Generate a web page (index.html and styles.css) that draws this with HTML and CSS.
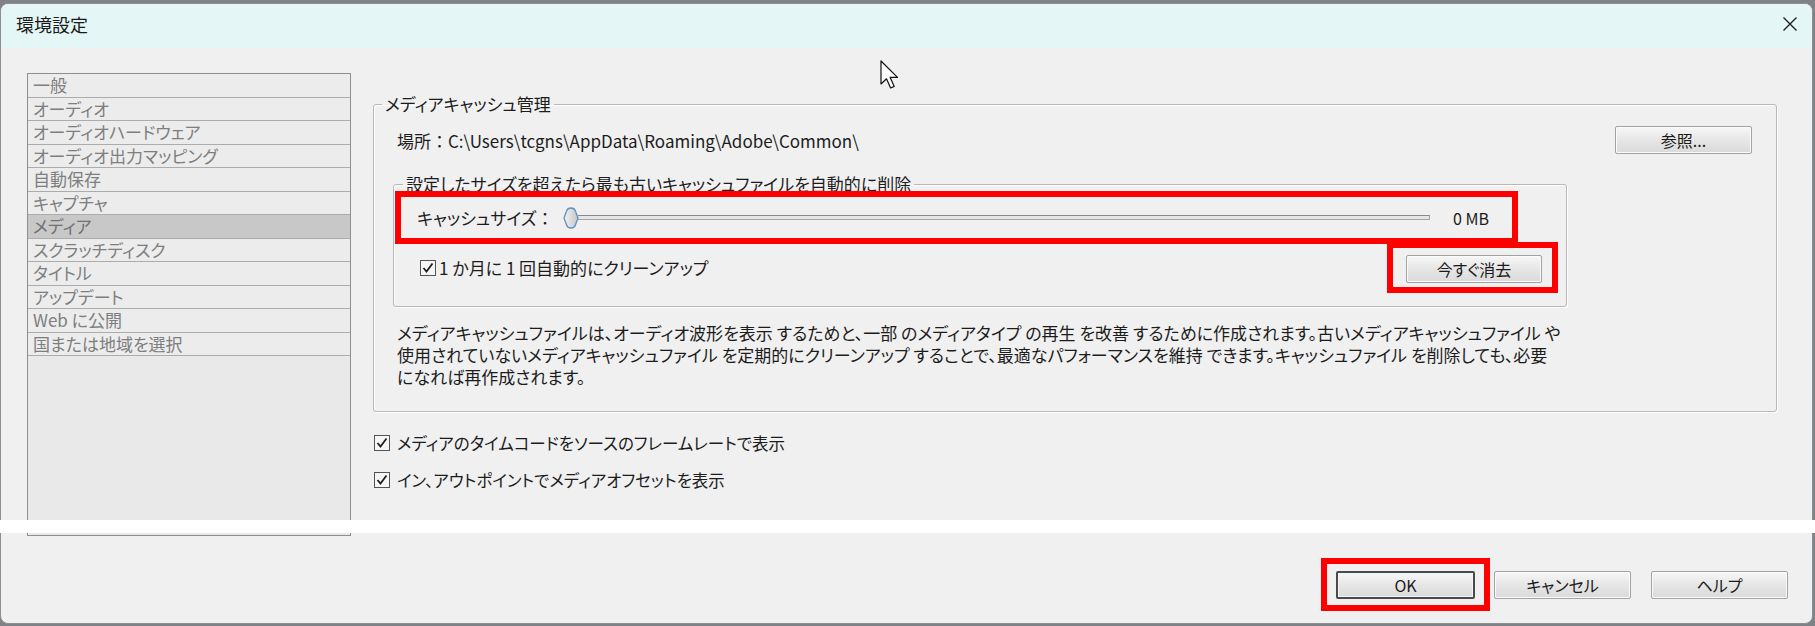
FILE: index.html
```html
<!DOCTYPE html>
<html lang="ja">
  <head>
    <meta charset="UTF-8" />
    <meta name="viewport" content="width=device-width, initial-scale=1.0" />
    <title>環境設定</title>
    <link rel="stylesheet" href="styles.css">
  </head>
  <body>
    <div class="window">
      <header class="titlebar">
        <span class="title">環境設定</span>
        <svg class="close" width="16" height="16" viewBox="0 0 16 16">
          <path d="M1.5 1.5 L14.5 14.5 M14.5 1.5 L1.5 14.5" />
        </svg>
      </header>

      <div class="main">
        <ul class="nav">
          <li>一般</li>
          <li>オーディオ</li>
          <li>オーディオハードウェア</li>
          <li>オーディオ出力マッピング</li>
          <li>自動保存</li>
          <li>キャプチャ</li>
          <li class="active">メディア</li>
          <li>スクラッチディスク</li>
          <li>タイトル</li>
          <li>アップデート</li>
          <li>Web に公開</li>
          <li>国または地域を選択</li>
        </ul>

        <div class="panel">
          <fieldset class="group">
            <legend>メディアキャッシュ管理</legend>
            <div class="location-row">
              <span class="location">場所<span class="colon">：</span>C:\Users\tcgns\AppData\Roaming\Adobe\Common\</span>
              <button class="btn">参照...</button>
            </div>

            <fieldset class="subgroup">
              <legend>設定したサイズを超えたら最も古いキャッシュファイルを自動的に削除</legend>
              <div class="mark size-row">
                <span class="size-label">キャッシュサイズ<span class="colon">：</span></span>
                <div class="slider">
                  <svg class="thumb" width="16" height="22" viewBox="0 0 16 22">
                    <defs>
                      <linearGradient id="thumbFill" x1="0" y1="0" x2="1" y2="0">
                        <stop offset="0" stop-color="#f4f4f4" />
                        <stop offset="1" stop-color="#c4c4c4" />
                      </linearGradient>
                    </defs>
                    <path d="M8 1 C10.5 1 11.8 2 12.4 4 L15 11 L12.4 18 C11.8 20 10.5 21 8 21 C5.5 21 4.2 20 3.6 18 L1 11 L3.6 4 C4.2 2 5.5 1 8 1 Z" fill="url(#thumbFill)" stroke="#5f92c0" stroke-width="1.3" />
                  </svg>
                  <div class="track"></div>
                </div>
                <span class="size-value">0 MB</span>
              </div>
              <div class="cleanup-row">
                <label class="check">
                  <svg class="box" width="16" height="16" viewBox="0 0 16 16">
                    <rect x="0.5" y="0.5" width="15" height="15" />
                    <path d="M3.5 8 L6.5 11.5 L12.5 3.5" />
                  </svg>
                  <span>1 か月に 1 回自動的にクリーンアップ</span>
                </label>
                <div class="mark clear-mark">
                  <button class="btn btn-clear">今すぐ消去</button>
                </div>
              </div>
            </fieldset>

            <p class="note">
              メディアキャッシュファイルは、オーディオ波形を表示 するためと、一部 のメディアタイプ の再生 を改善 するために作成されます。古いメディアキャッシュファイル や<br>
              使用されていないメディアキャッシュファイル を定期的にクリーンアップ することで、最適なパフォーマンスを維持 できます。キャッシュファイル を削除しても、必要<br>
              になれば再作成されます。
            </p>
          </fieldset>

          <label class="check option">
            <svg class="box" width="16" height="16" viewBox="0 0 16 16">
              <rect x="0.5" y="0.5" width="15" height="15" />
              <path d="M3.5 8 L6.5 11.5 L12.5 3.5" />
            </svg>
            <span>メディアのタイムコードをソースのフレームレートで表示</span>
          </label>
          <label class="check option">
            <svg class="box" width="16" height="16" viewBox="0 0 16 16">
              <rect x="0.5" y="0.5" width="15" height="15" />
              <path d="M3.5 8 L6.5 11.5 L12.5 3.5" />
            </svg>
            <span>イン、アウトポイントでメディアオフセットを表示</span>
          </label>
        </div>
      </div>

      <footer class="footer">
        <div class="mark ok-mark">
          <button class="btn btn-default">OK</button>
        </div>
        <button class="btn">キャンセル</button>
        <button class="btn">ヘルプ</button>
      </footer>
    </div>

    <div class="band"></div>
    <svg class="cursor" width="20" height="30" viewBox="0 0 20 30">
      <path d="M1 1 L1 24 L6.5 18.8 L10.6 28 L14.2 26.4 L10.2 17.4 L17.5 17.4 Z" />
    </svg>
  </body>
</html>
```

FILE: styles.css
```css
* {
  margin: 0;
  padding: 0;
  box-sizing: border-box;
}

body {
  width: 1815px;
  height: 626px;
  overflow: hidden;
  padding-top: 3px;
  background-color: #7f8388;
  font-family: "Noto Sans CJK JP", "Noto Sans", sans-serif;
  font-size: 17px;
  font-feature-settings: "palt";
  color: #1c1c1c;
}

.window {
  width: 1813px;
  height: 621px;
  display: flex;
  flex-direction: column;
  background-color: #f0f0f0;
  border: 1px solid #8d8d8d;
  border-radius: 8px;
  overflow: hidden;
}

/* title bar */
.titlebar {
  height: 44px;
  flex-shrink: 0;
  display: flex;
  align-items: center;
  justify-content: space-between;
  padding: 0 14px 4px 15px;
  background-color: #e4f6f5;
}

.title {
  font-size: 18px;
  line-height: 1;
  color: #1a1a1a;
}

.close path {
  stroke: #202020;
  stroke-width: 1.4;
  fill: none;
}

/* content */
.main {
  height: 500px;
  flex-shrink: 0;
  display: flex;
  align-items: flex-start;
  padding: 25px 0 12px 26px;
}

.nav {
  width: 324px;
  height: 463px;
  flex-shrink: 0;
  list-style: none;
  border: 1px solid #8e8e8e;
  background-color: #e9e9e9;
}

.nav li {
  height: 23.5px;
  line-height: 22px;
  padding-left: 5px;
  border-bottom: 1px solid #acacac;
  background-color: #ececec;
  color: #7e7e7e;
  white-space: nowrap;
}

.nav li.active {
  background-color: #c8c8c8;
  color: #707070;
}

.panel {
  width: 1404px;
  margin: 21px 0 0 22px;
}

fieldset {
  min-width: 0;
  border: 1px solid #b8b8b8;
  border-radius: 3px;
  box-shadow: 1px 1px 0 #ffffff, inset 1px 1px 0 #ffffff;
}

legend {
  line-height: 20px;
  padding: 0 3px;
  white-space: nowrap;
}

.group {
  padding: 0 24px 23px 20px;
}

.group > legend {
  margin-left: -12px;
}

.location-row {
  display: flex;
  align-items: center;
  justify-content: space-between;
  margin-top: 12px;
  padding-left: 3px;
}

.location {
  white-space: nowrap;
}

.colon {
  font-feature-settings: normal;
}

.subgroup {
  width: 1174px;
  margin: 20px 0 0 -1px;
  padding: 0 8px 13px 1px;
}

.subgroup > legend {
  margin-left: 8px;
}

/* red highlight frames */
.mark {
  position: relative;
  border: 6px solid #ff0000;
}

.size-row {
  width: 1123px;
  height: 53px;
  margin-top: -3px;
  display: flex;
  align-items: center;
  padding: 0 23px 0 16px;
}

.size-label {
  white-space: nowrap;
}

.slider {
  flex: 1;
  display: flex;
  align-items: center;
  margin: 0 23px 0 9px;
}

.thumb {
  flex-shrink: 0;
  position: relative;
  z-index: 1;
}

.track {
  flex: 1;
  height: 5px;
  margin-left: -1px;
  background-color: #e6e6e6;
  border-top: 1px solid #8a8a8a;
  border-bottom: 1px solid #a4a4a4;
  border-right: 1px solid #a4a4a4;
}

.size-value {
  font-size: 16px;
  white-space: nowrap;
}

.cleanup-row {
  display: flex;
  align-items: center;
  justify-content: space-between;
  margin-top: -2px;
  padding-left: 25px;
}

.clear-mark {
  width: 171px;
  height: 51px;
  padding: 7px 10px 4px 13px;
}

/* checkboxes */
.check {
  display: flex;
  align-items: center;
  gap: 3px;
  white-space: nowrap;
}

.box rect {
  fill: #f6f6f6;
  stroke: #545454;
}

.box path {
  fill: none;
  stroke: #1e1e1e;
  stroke-width: 1.8;
}

.note {
  margin-top: 15px;
  padding-left: 3px;
  line-height: 22px;
  white-space: nowrap;
}

.option {
  height: 24px;
  gap: 7px;
  padding-left: 1px;
  margin-top: 13px;
  font-size: 16.5px;
}

.group + .option {
  margin-top: 19px;
}

/* buttons */
.btn {
  width: 137px;
  height: 28px;
  border: 1px solid #a2a2a2;
  border-radius: 2px;
  background: linear-gradient(#f7f7f7, #e6e6e6 50%, #dadada);
  box-shadow: inset 0 0 0 1px #fbfbfb;
  font-family: inherit;
  font-size: 16px;
  font-feature-settings: "palt";
  color: #1a1a1a;
  line-height: 1;
}

.btn-clear {
  width: 136px;
}

.footer {
  flex: 1;
  display: flex;
  align-items: center;
  justify-content: flex-end;
  gap: 20px;
  padding: 0 24px 2px 0;
}

.ok-mark {
  padding: 7px 9px 6px;
  margin-right: -16px;
}

.btn-default {
  width: 139px;
  border: 2px solid #4a4a4a;
  box-shadow: inset 0 0 0 1px #f4f4f4;
}

/* overlays */
.band {
  position: absolute;
  left: 0;
  top: 520px;
  width: 1815px;
  height: 13px;
  background-color: #ffffff;
}

.cursor {
  position: absolute;
  left: 880px;
  top: 60px;
}

.cursor path {
  fill: #ffffff;
  stroke: #111111;
  stroke-width: 1.2;
  stroke-linejoin: round;
}
```
